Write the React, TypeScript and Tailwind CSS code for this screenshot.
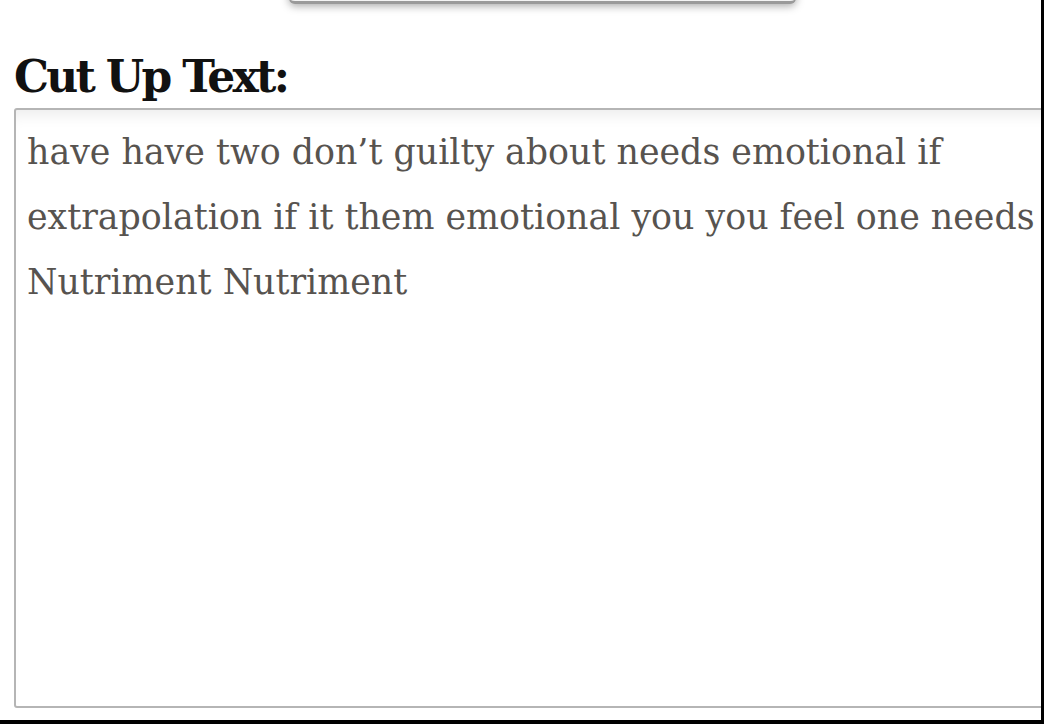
import React from "react";

const lines = [
  "have have two don\u2019t guilty about needs emotional if",
  "extrapolation if it them emotional you you feel one needs",
  "Nutriment Nutriment",
];

const App: React.FC = () => {
  return (
    <div className="w-[1044px] h-[724px] overflow-hidden bg-white border-r-[3px] border-b-[4px] border-black relative">
      {/* button peeking from above */}
      <div className="absolute left-[289px] top-[-44px] w-[507px] h-[48px] rounded-md bg-[#f4f4f4] border-b-[3px] border-[#9a9a9a] shadow-[0_2px_8px_rgba(0,0,0,0.35)]" />
      <div className="pt-[53px] pl-[14px]">
        <h2 className="font-['DejaVu_Serif',serif] font-bold text-[44px] leading-[48px] text-[#111] tracking-[-2.7px]">
          Cut Up Text:
        </h2>
        <div className="mt-[7px] w-[1100px] h-[600px] rounded-[3px] border-2 border-[#b5b5b5] shadow-[inset_0_14px_14px_-8px_rgba(0,0,0,0.07)] pl-[11px] pt-[10px]">
          <div className="font-['DejaVu_Serif',serif] text-[34.8px] leading-[65px] text-[#57534f] whitespace-nowrap">
            {lines.map((l) => (
              <p key={l}>{l}</p>
            ))}
          </div>
        </div>
      </div>
    </div>
  );
};

export default App;
